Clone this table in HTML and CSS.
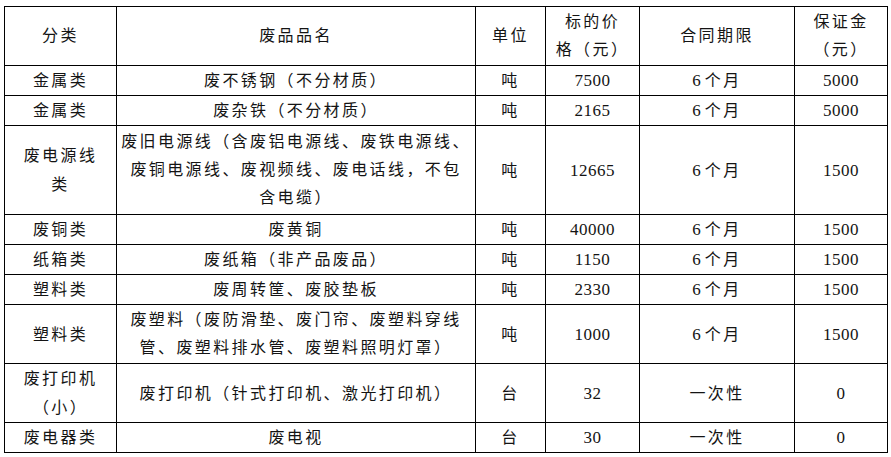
FILE: index.html
```html
<!DOCTYPE html>
<html lang="zh-CN">
<head>
<meta charset="utf-8">
<title>废品品名与价格</title>
<link rel="stylesheet" href="styles.css">
</head>
<body>
<div class="page">
<table class="sheet">
<colgroup>
<col class="c1"><col class="c2"><col class="c3"><col class="c4"><col class="c5"><col class="c6">
</colgroup>
<thead>
<tr class="r2">
<th>分类</th>
<th>废品品名</th>
<th>单位</th>
<th>标的价<br>格（元）</th>
<th>合同期限</th>
<th>保证金<br>（元）</th>
</tr>
</thead>
<tbody>
<tr><td>金属类</td><td>废不锈钢（不分材质）</td><td>吨</td><td class="num">7500</td><td><span class="n">6</span>个月</td><td class="num">5000</td></tr>
<tr><td>金属类</td><td>废杂铁（不分材质）</td><td>吨</td><td class="num">2165</td><td><span class="n">6</span>个月</td><td class="num">5000</td></tr>
<tr class="r3"><td>废电源线<br>类</td><td class="name">废旧电源线（含废铝电源线、废铁电源线、<br>废铜电源线、废视频线、废电话线，不包<br>含电缆）</td><td>吨</td><td class="num">12665</td><td><span class="n">6</span>个月</td><td class="num">1500</td></tr>
<tr><td>废铜类</td><td>废黄铜</td><td>吨</td><td class="num">40000</td><td><span class="n">6</span>个月</td><td class="num">1500</td></tr>
<tr><td>纸箱类</td><td>废纸箱（非产品废品）</td><td>吨</td><td class="num">1150</td><td><span class="n">6</span>个月</td><td class="num">1500</td></tr>
<tr><td>塑料类</td><td>废周转筐、废胶垫板</td><td>吨</td><td class="num">2330</td><td><span class="n">6</span>个月</td><td class="num">1500</td></tr>
<tr><td>塑料类</td><td class="name">废塑料（废防滑垫、废门帘、废塑料穿线<br>管、废塑料排水管、废塑料照明灯罩）</td><td>吨</td><td class="num">1000</td><td><span class="n">6</span>个月</td><td class="num">1500</td></tr>
<tr><td>废打印机<br>（小）</td><td>废打印机（针式打印机、激光打印机）</td><td>台</td><td class="num">32</td><td>一次性</td><td class="num">0</td></tr>
<tr><td>废电器类</td><td>废电视</td><td>台</td><td class="num">30</td><td>一次性</td><td class="num">0</td></tr>
</tbody>
</table>
</div>
</body>
</html>
```
FILE: styles.css
```css
html, body {
  margin: 0;
  padding: 0;
  background: #ffffff;
}
.page {
  padding: 6px 4px 0 4px;
}
.sheet {
  border-collapse: collapse;
  table-layout: fixed;
  width: 883px;
  font-family: "Liberation Serif", "Noto Sans CJK SC", serif;
  font-size: 16px;
  color: #141414;
}
.c1 { width: 112px; }
.c2 { width: 359px; }
.c3 { width: 70px; }
.c4 { width: 94px; }
.c5 { width: 155px; }
.c6 { width: 93px; }
.sheet th,
.sheet td {
  border: 1px solid #000;
  padding: 0 4px;
  line-height: 29px;
  text-align: center;
  vertical-align: middle;
  font-weight: normal;
  letter-spacing: 2.4px;
  white-space: nowrap;
}
.sheet th {
  line-height: 28px;
  padding-top: 1px;
  padding-bottom: 1px;
}
.sheet td.num {
  font-size: 17px;
  letter-spacing: 0.5px;
}
.n {
  font-size: 17px;
  letter-spacing: 0;
  margin-right: 4px;
}
.sheet td.name {
  line-height: 28px;
  padding-top: 1px;
  padding-bottom: 1px;
}
.r3 td.name {
  line-height: 28px;
  padding-top: 2px;
  padding-bottom: 2px;
}
```
